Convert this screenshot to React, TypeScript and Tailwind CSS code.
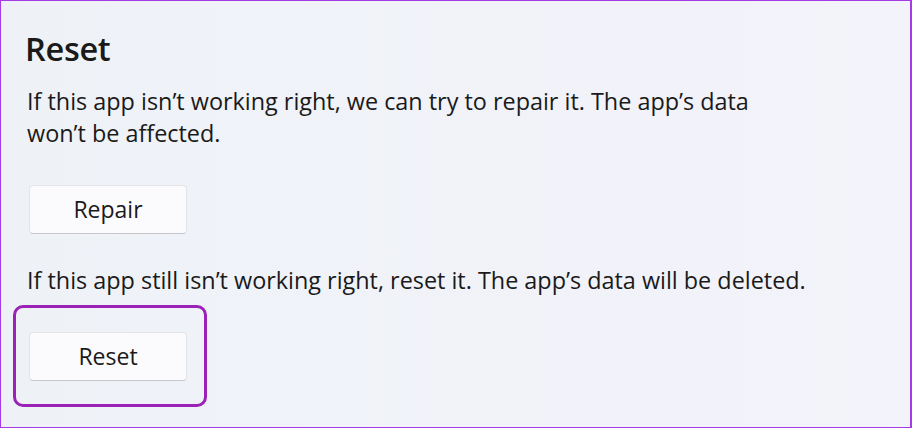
export default function App() {
  return (
    <div
      className="w-[912px] h-[428px] overflow-hidden border border-r-2 border-[#a43be6] bg-gradient-to-r from-[#eef2f7] to-[#f3f3fa] text-[#1a1a1a]"
      style={{ fontFamily: '"Open Sans", "Noto Sans", sans-serif' }}
    >
      <div className="pl-[26px] pt-[28px]">
        <h2 className="-ml-[2px] text-[32.5px] leading-[40px] font-semibold tracking-[-0.3px]">Reset</h2>
        <p className="mt-[16px] text-[23.4px] leading-[32px] w-[770px]">
          If this app isn’t working right, we can try to repair it. The app’s data won’t be affected.
        </p>
        <button className="mt-[36px] ml-[2px] flex h-[49px] w-[158px] items-center justify-center rounded-[4px] border border-[#e3e4e8] border-b-[#c6c7cc] bg-[#fbfbfd] text-[23px] text-[#1a1a1a]">
          Repair
        </button>
        <p className="mt-[30px] text-[23.4px] leading-[32px]">
          If this app still isn’t working right, reset it. The app’s data will be deleted.
        </p>
        <div className="mt-[9px] -ml-[14px] w-[194px] h-[102px] rounded-[10px] border-[3px] border-[#9b22b7] pl-[13px] pt-[24px]">
          <button className="flex h-[49px] w-[158px] items-center justify-center rounded-[4px] border border-[#e3e4e8] border-b-[#c6c7cc] bg-[#fbfbfd] text-[23px] text-[#1a1a1a]">
            Reset
          </button>
        </div>
      </div>
    </div>
  );
}
